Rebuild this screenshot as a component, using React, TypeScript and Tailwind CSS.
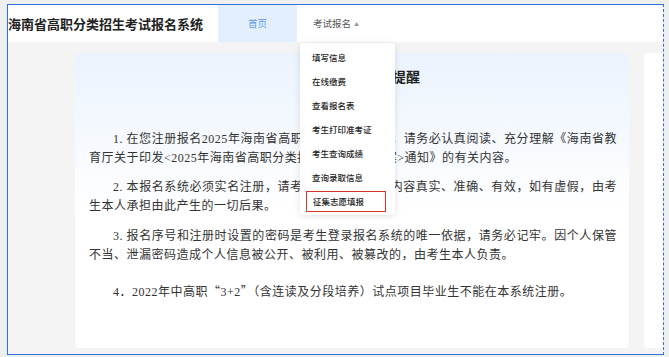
import React from "react";

const menu = ["填写信息", "在线缴费", "查看报名表", "考生打印准考证", "考生查询成绩", "查询录取信息", "征集志愿填报"];

const cjk = { fontFamily: '"Noto Sans CJK SC", sans-serif' };

export default function App() {
  return (
    <div className="w-[669px] h-[357px] bg-[#eef0ef] overflow-hidden pt-[4px] pl-[7px]" style={{ fontFamily: '"Noto Sans CJK SC", "Noto Sans", sans-serif' }}>
      <div className="relative w-[657px] h-[351px] border border-[#2f6fde] [border-right-style:dashed] overflow-hidden flex flex-col bg-[#f4f4f4]">
        {/* header */}
        <div className="h-[37px] bg-white flex items-stretch shrink-0">
          <div className="text-[13px] font-bold text-[#222] leading-[37px] w-[210px] whitespace-nowrap">海南省高职分类招生考试报名系统</div>
          <div className="w-[79px] bg-[#e3effd] text-[#5b9ae4] text-[9.5px] flex items-center justify-center">首页</div>
          <div className="pl-[16px] flex items-center text-[9.5px] text-[#555]">
            考试报名<span className="ml-[3px] text-[5px] text-[#999]">▲</span>
          </div>
        </div>
        {/* body */}
        <div className="flex-1 flex pl-[67px] pt-[11px] pb-[6px] gap-[15px]">
          <div className="w-[554px] shrink-0 rounded-[4px] bg-linear-to-b from-[#ebf3fd] to-white to-[55%] pl-[14px] pr-[12px] pt-[13px]">
            <div className="text-[14px] font-bold text-[#222] leading-[20px] text-center pl-[22px]">报名注册须知提醒</div>
            <div className="mt-[44px] text-[12px] text-[#333] leading-[19px] tracking-[0.5px] text-justify" style={{ fontFamily: '"Liberation Serif", "Noto Sans CJK SC", serif' }}>
              <p className="indent-[24px]">1. 在您注册报名2025年海南省高职分类招生考试前，请务必认真阅读、充分理解《海南省教育厅关于印发&lt;2025年海南省高职分类招生考试工作方案&gt;通知》的有关内容。</p>
              <p className="indent-[24px] mt-[10px]">2. 本报名系统必须实名注册，请考生保证所填信息内容真实、准确、有效，如有虚假，由考生本人承担由此产生的一切后果。</p>
              <p className="indent-[24px] mt-[11px]">3. 报名序号和注册时设置的密码是考生登录报名系统的唯一依据，请务必记牢。因个人保管不当、泄漏密码造成个人信息被公开、被利用、被篡改的，由考生本人负责。</p>
              <p className="indent-[24px] mt-[16px]">4．2022年中高职<span style={cjk}>“</span>3+2<span style={cjk}>”</span>（含连读及分段培养）试点项目毕业生不能在本系统注册。</p>
            </div>
          </div>
          <div className="w-[60px] shrink-0 rounded-[4px] bg-white"></div>
        </div>
        {/* dropdown */}
        <div className="absolute left-[292px] top-[38px] w-[95px] h-[172px] bg-white rounded-[3px] shadow-[0_1px_6px_rgba(0,0,0,0.12)] pt-[2px]">
          {menu.map((m, i) => (
            <div key={m} className="h-[24px] flex items-center pl-[6px]">
              <div className={"h-[21px] flex items-center px-[6px] text-[8.5px] font-medium text-[#222] whitespace-nowrap " + (i === 6 ? "border-[1.5px] border-[#d9342b] w-[80px]" : "")}>{m}</div>
            </div>
          ))}
        </div>
      </div>
    </div>
  );
}
